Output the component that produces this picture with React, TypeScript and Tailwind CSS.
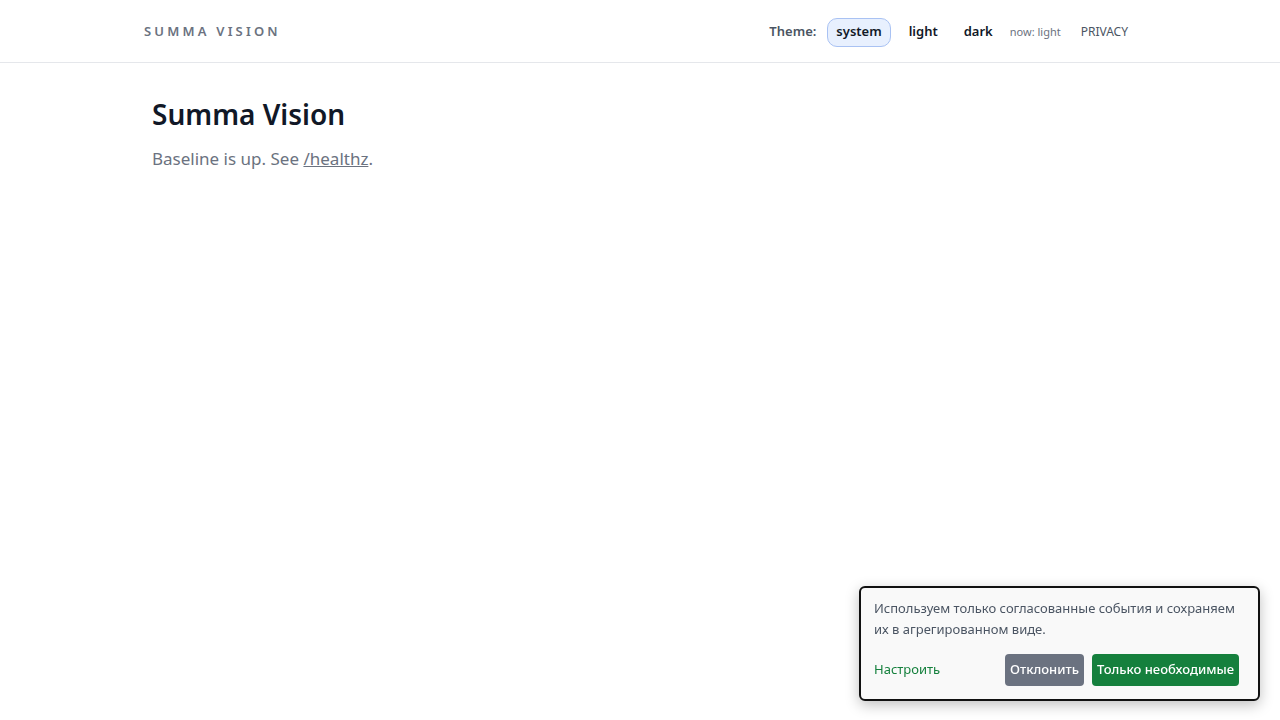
export default function App() {
  const font = { fontFamily: '"Noto Sans", "Open Sans", sans-serif' }
  return (
    <div className="min-h-screen bg-white text-[#111827]" style={font}>
      <header className="h-[63px] border-b border-[#e5e7eb]">
        <div className="mx-auto flex h-full max-w-[1024px] items-center justify-between px-4 pt-[2px]">
          <span className="text-[13px] font-semibold tracking-[0.245em] text-[#6b7280]">SUMMA VISION</span>
          <nav className="flex items-center text-[13px]">
            <span className="mr-[11px] font-semibold text-[#4b5563]">Theme:</span>
            <button className="h-[29px] rounded-[10px] border border-[#a9c2f3] bg-[#e8f0fe] px-[8px] font-semibold text-[#111827]">
              system
            </button>
            <button className="ml-[9px] h-[29px] px-[9px] font-semibold text-[#111827]">light</button>
            <button className="ml-[8px] h-[29px] px-[9px] font-semibold text-[#111827]">dark</button>
            <span className="ml-[8px] text-[11px] text-[#6b7280]">now: light</span>
            <a className="ml-[20px] mr-[8px] text-[12px] text-[#4b5563]">PRIVACY</a>
          </nav>
        </div>
      </header>

      <main className="mx-auto max-w-[1024px] px-6 pt-[33px]">
        <h1 className="text-[28px] font-semibold leading-[36px] text-[#111827]">Summa Vision</h1>
        <p className="mt-[14px] text-[17px] text-[#6b7280]">
          Baseline is up. See <a className="underline">/healthz</a>.
        </p>
      </main>

      <div className="fixed bottom-[19px] right-[20px] w-[401px] rounded-[6px] border-2 border-[#111] bg-[#f9f9f9] px-[13px] pb-[13px] pt-[10px] shadow-[0_4px_14px_rgba(0,0,0,0.25)]">
        <p className="text-[13px] leading-[21px] text-[#4b5563]">
          Используем только согласованные события и сохраняем их в агрегированном виде.
        </p>
        <div className="mt-[14px] flex items-center">
          <button className="text-[13px] text-[#15803d]">Настроить</button>
          <div className="ml-auto mr-[6px] flex gap-[8px]">
            <button className="h-[32px] rounded-[4px] bg-[#6b7280] px-[5px] text-[13px] font-medium text-white">
              Отклонить
            </button>
            <button className="h-[32px] rounded-[4px] bg-[#15803d] px-[5px] text-[13px] font-medium text-white">
              Только необходимые
            </button>
          </div>
        </div>
      </div>
    </div>
  )
}
